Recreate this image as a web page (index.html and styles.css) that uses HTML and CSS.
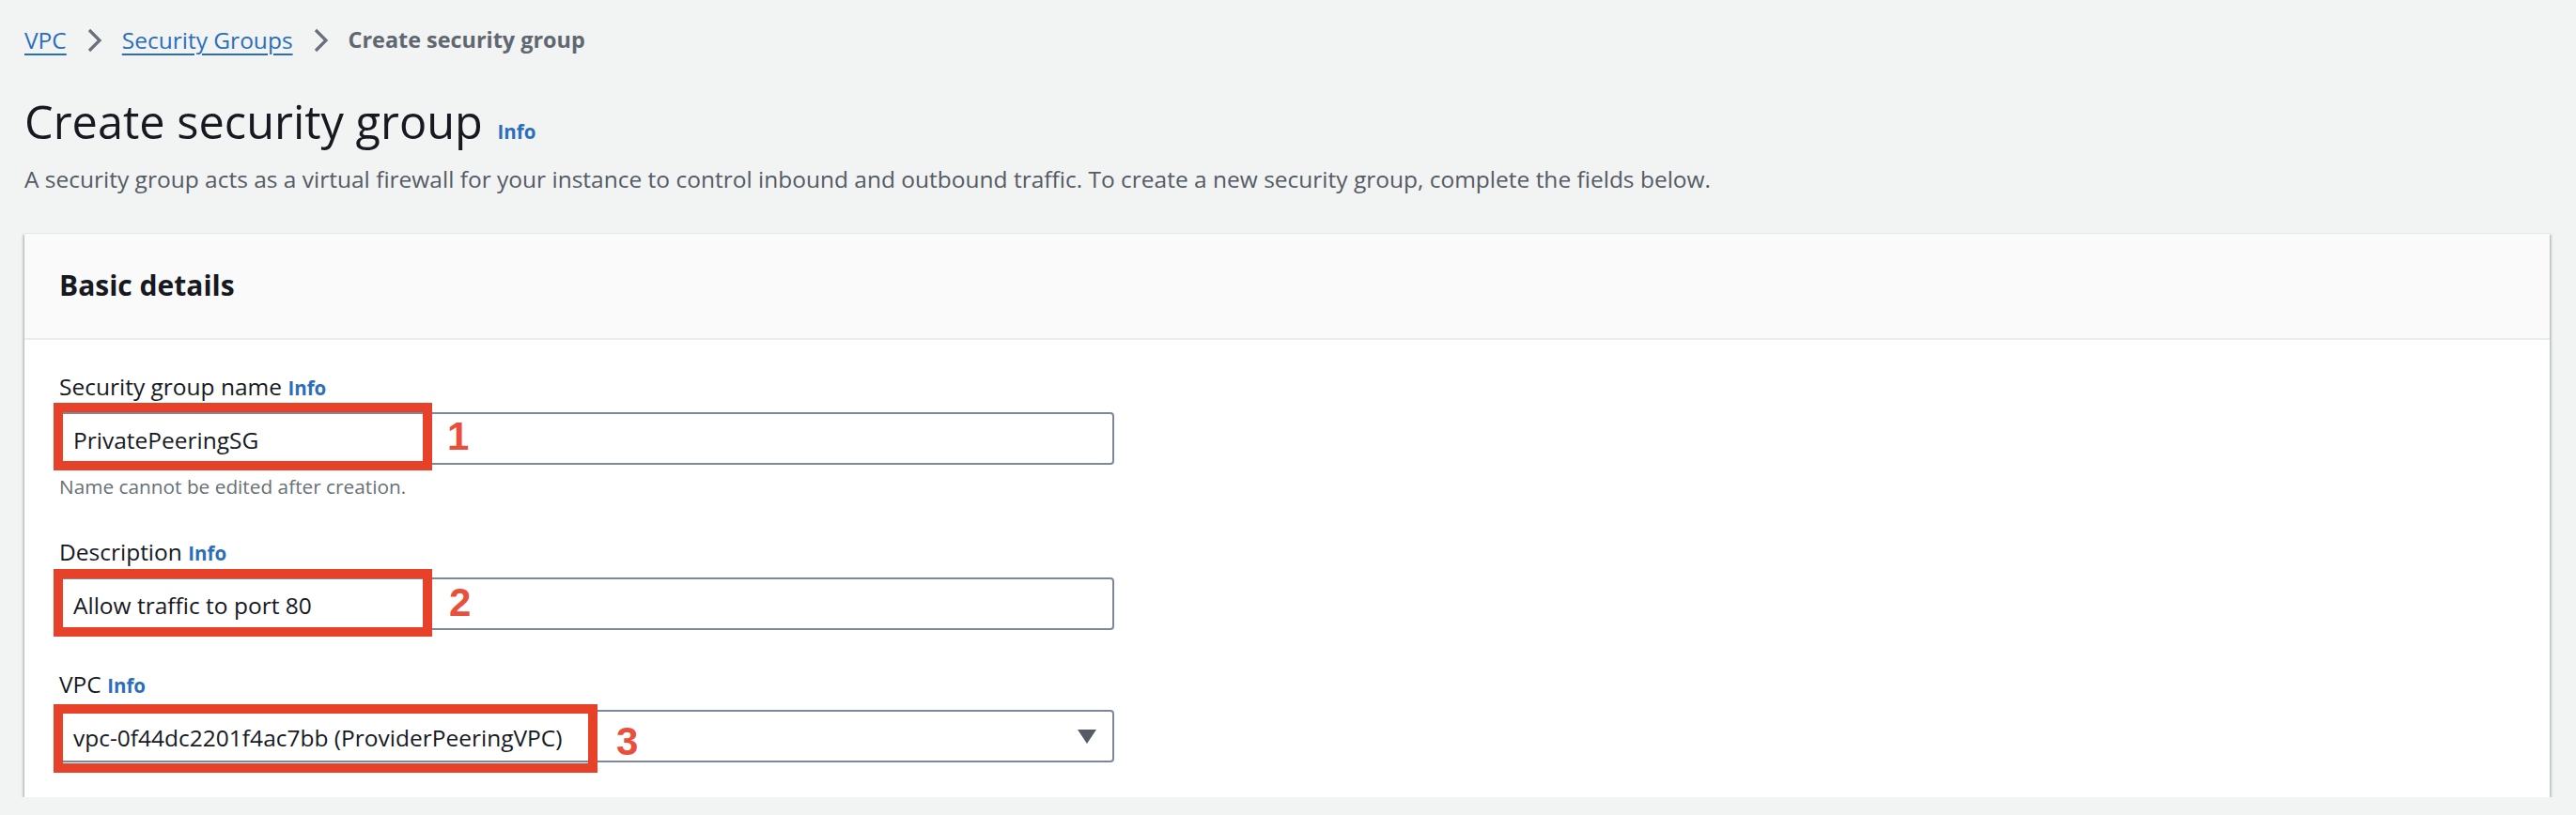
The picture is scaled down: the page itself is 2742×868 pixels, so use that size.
FILE: index.html
```html
<!DOCTYPE html>
<html lang="en">
<head>
<meta charset="utf-8">
<title>Create security group</title>
<link rel="stylesheet" href="styles.css">
</head>
<body>
<div class="page">
  <nav class="crumbs">
    <a class="crumb-link" href="#">VPC</a>
    <svg class="chev" viewBox="0 0 16 26" width="16" height="26"><path d="M2 2 L13 13 L2 24" fill="none" stroke="#687078" stroke-width="3.2"/></svg>
    <a class="crumb-link" href="#">Security Groups</a>
    <svg class="chev" viewBox="0 0 16 26" width="16" height="26"><path d="M2 2 L13 13 L2 24" fill="none" stroke="#687078" stroke-width="3.2"/></svg>
    <span class="crumb-current">Create security group</span>
  </nav>

  <header class="page-head">
    <h1 class="title">Create security group <a class="info info-title" href="#">Info</a></h1>
    <p class="lead">A security group acts as a virtual firewall for your instance to control inbound and outbound traffic. To create a new security group, complete the fields below.</p>
  </header>

  <section class="card">
    <div class="card-head">
      <h2 class="card-title">Basic details</h2>
    </div>
    <div class="card-body">
      <div class="field">
        <div class="label">Security group name <a class="info" href="#">Info</a></div>
        <div class="control">
          <div class="input">PrivatePeeringSG</div>
          <div class="annot annot-1"><span class="box"></span><span class="num">1</span></div>
        </div>
        <div class="hint">Name cannot be edited after creation.</div>
      </div>

      <div class="field">
        <div class="label">Description <a class="info" href="#">Info</a></div>
        <div class="control">
          <div class="input">Allow traffic to port 80</div>
          <div class="annot annot-2"><span class="box"></span><span class="num">2</span></div>
        </div>
      </div>

      <div class="field field-last">
        <div class="label">VPC <a class="info" href="#">Info</a></div>
        <div class="control">
          <div class="input select">
            <span class="select-value">vpc-0f44dc2201f4ac7bb (ProviderPeeringVPC)</span>
            <svg class="caret" viewBox="0 0 20 15" width="20" height="15"><path d="M0 0 H20 L10 15 Z" fill="#545b64"/></svg>
          </div>
          <div class="annot annot-3"><span class="box"></span><span class="num">3</span></div>
        </div>
      </div>
    </div>
  </section>
</div>
</body>
</html>
```

FILE: styles.css
```css
* { box-sizing: border-box; }

html, body {
  margin: 0;
  padding: 0;
  background: #f2f3f3;
}

body {
  font-family: "Open Sans", Roboto, "Liberation Sans", Arial, sans-serif;
  font-size: 24.5px;
  line-height: 35px;
  color: #16191f;
}

.page {
  padding: 25px 28px 0 26px;
}

/* breadcrumbs */
.crumbs {
  display: flex;
  align-items: center;
  height: 35px;
}

.crumb-link {
  color: #2a6ebb;
  text-decoration: underline;
  text-decoration-thickness: 2px;
  text-underline-offset: 5px;
}

.chev {
  margin: 0 21px 0 22px;
  display: block;
}

.crumb-current {
  color: #5f6770;
  font-weight: 700;
  font-size: 23.4px;
}

/* page header */
.page-head {
  margin-top: 41px;
}

.title {
  margin: 0;
  font-size: 48.7px;
  line-height: 56px;
  font-weight: 400;
  color: #16191f;
}

.info {
  color: #2a6ebb;
  font-weight: 700;
  font-size: 20.5px;
  line-height: 1;
  text-decoration: none;
}

.info-title {
  margin-left: 3px;
}

.lead {
  margin: 16px 0 0 0;
  color: #545b64;
}

/* card */
.card {
  margin-top: 40px;
  background: #ffffff;
  border-top: 1px solid #e4e7e9;
  box-shadow: 0 2px 2px 0 rgba(0, 28, 36, 0.3), 2px 2px 2px 0 rgba(0, 28, 36, 0.15), -2px 2px 2px 0 rgba(0, 28, 36, 0.15);
}

.card-head {
  background: #fafafa;
  border-bottom: 2px solid #eaeded;
  padding: 35px 37px 37px 37px;
}

.card-title {
  margin: 0;
  font-size: 30px;
  line-height: 39px;
  font-weight: 700;
  color: #16191f;
}

.card-body {
  padding: 32px 37px 37px 37px;
}

.field + .field {
  margin-top: 38px;
}

.field-last.field {
  margin-top: 40px;
}

.label {
  color: #16191f;
}

.control {
  position: relative;
  margin-top: 10px;
  width: 1123px;
}

.input {
  height: 56px;
  border: 2px solid #7d8998;
  border-radius: 4px;
  background: #fff;
  padding: 0 13px;
  display: flex;
  align-items: center;
  padding-top: 2px;
  color: #16191f;
}

.select {
  justify-content: space-between;
  padding-right: 17px;
}

.caret {
  display: block;
  margin-top: -2px;
}

.hint {
  margin-top: 9px;
  font-size: 20.8px;
  line-height: 28px;
  color: #687078;
}

/* annotations */
.annot {
  position: absolute;
  left: -6px;
  display: flex;
  align-items: center;
  gap: 16px;
}

.box {
  display: block;
  border: 10px solid #e8412a;
  height: 72px;
}

.num {
  font-family: "Liberation Sans", Arial, sans-serif;
  font-weight: 700;
  font-size: 42px;
  line-height: 42px;
  color: #ea4f3b;
}

.annot-1 { top: -10px; }
.annot-1 .box { width: 403px; }

.annot-2 { top: -9px; }
.annot-2 .box { width: 403px; }
.annot-2 .num { margin-left: 2px; }

.annot-3 { top: -6px; }
.annot-3 .box { width: 579px; height: 73px; }
.annot-3 .num { margin-left: 4px; margin-top: 6px; }
```
